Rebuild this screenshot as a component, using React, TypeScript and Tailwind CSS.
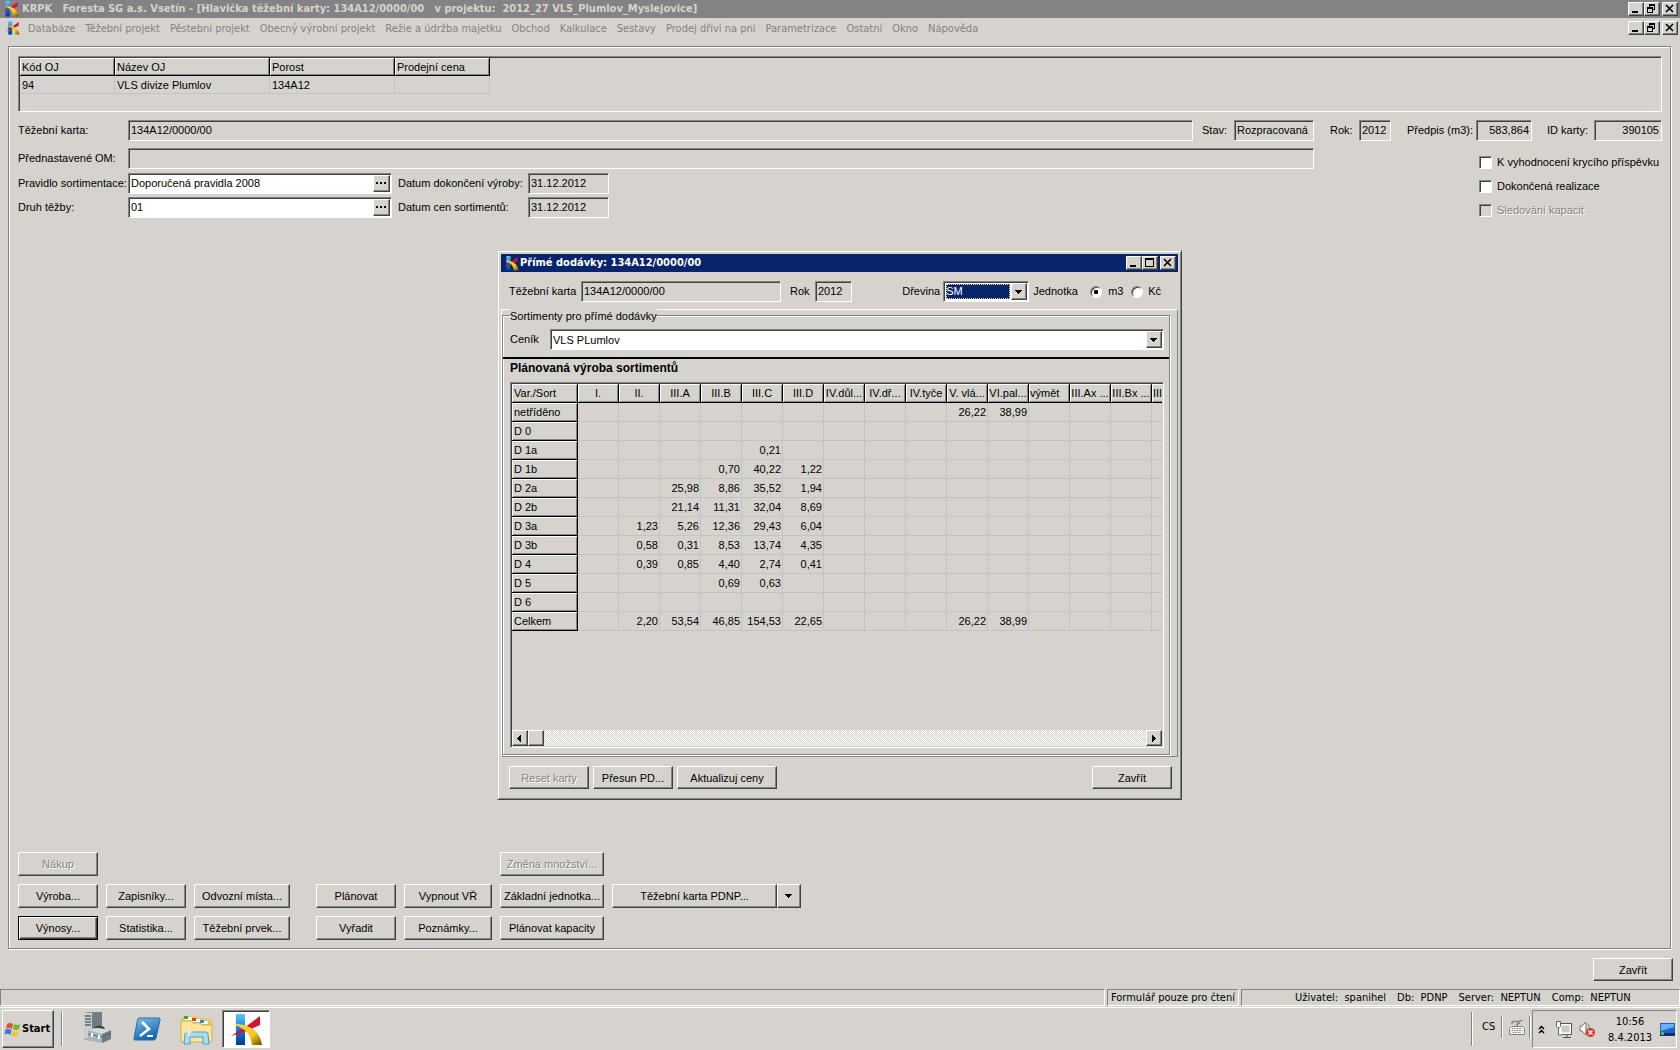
import type { ReactNode } from 'react';

const RAISED =
  'border border-t-white border-l-white border-r-[#424142] border-b-[#424142] bg-[#d6d3ce] shadow-[inset_-1px_-1px_0_#848284]';
const SUNKEN =
  'border border-t-[#848284] border-l-[#848284] border-r-white border-b-white shadow-[inset_1px_1px_0_#424142]';
const FIELD = SUNKEN + ' h-[21px] min-w-0 px-0.5 pb-[3px] pt-px leading-[15px] outline-none';
const PANE = 'border border-b-white border-l-[#848284] border-r-white border-t-[#848284]';
const UI = 'font-["DejaVu_Sans_Condensed","DejaVu_Sans",sans-serif]';

const MENU = [
  'Databáze', 'Těžební projekt', 'Pěstební projekt', 'Obecný výrobní projekt', 'Režie a údržba majetku',
  'Obchod', 'Kalkulace', 'Sestavy', 'Prodej dříví na pni', 'Parametrizace', 'Ostatní', 'Okno', 'Nápověda',
];

const STATUS = ['Uživatel:  spanihel', 'Db:  PDNP', 'Server:  NEPTUN', 'Comp:  NEPTUN'];

const COLS = [
  'I.', 'II.', 'III.A', 'III.B', 'III.C', 'III.D', 'IV.důl...', 'IV.dř...', 'IV.tyče', 'V. vlá...',
  'VI.pal...', 'výmět', 'III.Ax ...', 'III.Bx ...', 'III',
];

const ROWS: [string, Record<number, string>][] = [
  ['netříděno', { 9: '26,22', 10: '38,99' }],
  ['D 0', {}],
  ['D 1a', { 4: '0,21' }],
  ['D 1b', { 3: '0,70', 4: '40,22', 5: '1,22' }],
  ['D 2a', { 2: '25,98', 3: '8,86', 4: '35,52', 5: '1,94' }],
  ['D 2b', { 2: '21,14', 3: '11,31', 4: '32,04', 5: '8,69' }],
  ['D 3a', { 1: '1,23', 2: '5,26', 3: '12,36', 4: '29,43', 5: '6,04' }],
  ['D 3b', { 1: '0,58', 2: '0,31', 3: '8,53', 4: '13,74', 5: '4,35' }],
  ['D 4', { 1: '0,39', 2: '0,85', 3: '4,40', 4: '2,74', 5: '0,41' }],
  ['D 5', { 3: '0,69', 4: '0,63' }],
  ['D 6', {}],
  ['Celkem', { 1: '2,20', 2: '53,54', 3: '46,85', 4: '154,53', 5: '22,65', 9: '26,22', 10: '38,99' }],
];

function Logo({ className }: { className: string }) {
  return (
    <svg viewBox="0 0 32 32" className={className} aria-hidden="true">
      <defs>
        <linearGradient id="kb" x1="0" y1="0" x2="0" y2="1">
          <stop offset="0" stopColor="#5ec8fa" />
          <stop offset="0.5" stopColor="#1479d8" />
          <stop offset="1" stopColor="#04398c" />
        </linearGradient>
        <linearGradient id="ky" x1="0" y1="0" x2="1" y2="1">
          <stop offset="0" stopColor="#ffd83a" />
          <stop offset="0.6" stopColor="#f6c81e" />
          <stop offset="1" stopColor="#6b4a05" />
        </linearGradient>
      </defs>
      <rect x="5" y="0" width="9" height="31" fill="url(#kb)" />
      <path d="M29 2v9L16 17 0 22l9-6 8-5z" fill="#d4142e" />
      <path d="M4 10c13 0 25 6 27 21H21C20 21 15 15 4 11z" fill="url(#ky)" />
    </svg>
  );
}

function WinButton({ kind }: { kind: 'min' | 'restore' | 'max' | 'close' }) {
  return (
    <button type="button" aria-label={kind} className={`${RAISED} flex h-[14px] w-4 items-center justify-center`}>
      <svg width="12" height="10" viewBox="0 0 12 10" shapeRendering="crispEdges" fill="none" stroke="#000">
        {kind === 'min' && <path d="M2 8h6" strokeWidth="2" />}
        {kind === 'max' && <path d="M1.5 1v7.5h8V1M1 1h9" strokeWidth="1" />}
        {kind === 'max' && <path d="M1 1h9" strokeWidth="2" />}
        {kind === 'restore' && (
          <>
            <path d="M3.5 3V1.5h5v4H7M1.5 4v4.5h5V4" />
            <path d="M3 1h6M1 4h6" strokeWidth="2" />
          </>
        )}
        {kind === 'close' && <path d="M2 1l7 7M9 1L2 8" strokeWidth="1.6" shapeRendering="auto" />}
      </svg>
    </button>
  );
}

function WinButtons({ middle }: { middle: 'restore' | 'max' }) {
  return (
    <div className="flex shrink-0">
      <WinButton kind="min" />
      <WinButton kind={middle} />
      <span className="w-0.5" />
      <WinButton kind="close" />
    </div>
  );
}

function Btn({ children, className = 'h-6', disabled, primary }: { children: ReactNode; className?: string; disabled?: boolean; primary?: boolean }) {
  return (
    <button
      type="button"
      disabled={disabled}
      className={`${
        primary
          ? 'border border-black bg-[#d6d3ce] shadow-[inset_1px_1px_0_white,inset_-1px_-1px_0_#424142,inset_-2px_-2px_0_#848284]'
          : RAISED
      } whitespace-nowrap text-center leading-5 disabled:text-[#848284] disabled:[text-shadow:1px_1px_0_white] ${className}`}
    >
      {children}
    </button>
  );
}

function Down() {
  return (
    <svg width="7" height="4" viewBox="0 0 7 4" shapeRendering="crispEdges" aria-hidden="true">
      <path d="M0 0h7v1H6v1H5v1H4v1H3V3H2V2H1V1H0z" />
    </svg>
  );
}

function DotsField({ id, value }: { id: string; value: string }) {
  return (
    <div className={`${SUNKEN} flex h-[21px] w-[264px] bg-white p-px`}>
      <input id={id} defaultValue={value} className="min-w-0 flex-1 bg-white px-px pb-px leading-4 outline-none" />
      <button type="button" aria-label="Vybrat" className={`${RAISED} flex w-[17px] items-center justify-center gap-0.5 pb-px pr-px`}>
        <i className="size-0.5 bg-black" />
        <i className="size-0.5 bg-black" />
        <i className="size-0.5 bg-black" />
      </button>
    </div>
  );
}

function Check({ label, disabled }: { label: string; disabled?: boolean }) {
  return (
    <label className={`flex h-[13px] items-center gap-[5px] whitespace-nowrap ${disabled ? 'text-[#848284] [text-shadow:1px_1px_0_white]' : ''}`}>
      <input type="checkbox" disabled={disabled} className={`${SUNKEN} size-[13px] shrink-0 appearance-none bg-white disabled:bg-[#d6d3ce]`} />
      {label}
    </label>
  );
}

function HeadCell({ children, className = '' }: { children: ReactNode; className?: string }) {
  return (
    <th
      className={`overflow-hidden whitespace-nowrap border-b border-r border-black p-0 font-normal leading-4 shadow-[inset_1px_1px_0_white,inset_-1px_-1px_0_#848284] ${className}`}
    >
      {children}
    </th>
  );
}

function UnitTable() {
  return (
    <div className={`${SUNKEN} h-14 p-px`}>
      <table className="w-[470px] table-fixed border-separate border-spacing-0 text-left">
        <thead>
          <tr className="h-[18px]">
            <HeadCell className="w-[95px] pl-0.5">Kód OJ</HeadCell>
            <HeadCell className="w-[155px] pl-0.5">Název OJ</HeadCell>
            <HeadCell className="w-[125px] pl-0.5">Porost</HeadCell>
            <HeadCell className="w-[95px] pl-0.5">Prodejní cena</HeadCell>
          </tr>
        </thead>
        <tbody>
          <tr className="h-[18px]">
            {['94', 'VLS divize Plumlov', '134A12', ''].map((t, i) => (
              <td key={i} className="border-b border-r border-[#c6c3c6] p-0 pl-0.5 leading-4">{t}</td>
            ))}
          </tr>
        </tbody>
      </table>
    </div>
  );
}

function Radio({ on }: { on?: boolean }) {
  return (
    <input
      type="radio"
      name="jednotka"
      defaultChecked={on}
      className="size-3 appearance-none rounded-full border border-b-white border-l-[#848284] border-r-white border-t-[#848284] bg-white shadow-[inset_1px_1px_0_#424142] checked:bg-[radial-gradient(circle,#000_0_2px,#fff_2.5px)]"
    />
  );
}

function Dialog() {
  return (
    <section
      aria-label="Přímé dodávky"
      className="absolute left-[497px] top-[250px] w-[685px] border border-b-[#424142] border-l-[#d6d3ce] border-r-[#424142] border-t-[#d6d3ce] bg-[#d6d3ce] p-[3px] shadow-[inset_1px_1px_0_white,inset_-1px_-1px_0_#848284]"
    >
      <div className="flex h-[18px] items-center bg-[#08246b] pl-[3px] pr-0.5 text-white">
        <Logo className="size-[15px]" />
        <h2 className={`${UI} ml-px flex-1 text-[11px] font-bold leading-4`}>Přímé dodávky: 134A12/0000/00</h2>
        <WinButtons middle="max" />
      </div>

      <div className="flex items-center pb-[7px] pt-[9px]">
        <label htmlFor="dkarta" className="w-20 pl-2">Těžební karta</label>
        <input id="dkarta" readOnly value="134A12/0000/00" className={`${FIELD} w-[200px]`} />
        <label htmlFor="drok" className="w-[34px] pl-[9px]">Rok</label>
        <input id="drok" readOnly value="2012" className={`${FIELD} w-[37px]`} />
        <span className="flex-1" />
        <label htmlFor="drevina" className="mr-[3px]">Dřevina</label>
        <div className={`${SUNKEN} relative flex h-[21px] w-[86px] bg-white p-px`}>
          <select id="drevina" className="m-px w-[64px] appearance-none bg-[#08246b] leading-[15px] text-white outline-1 -outline-offset-1 outline-dotted outline-[#f7db94]">
            <option>SM</option>
          </select>
          <span className={`${RAISED} pointer-events-none absolute inset-y-px right-px flex w-4 items-center justify-center pr-px`}><Down /></span>
        </div>
        <span className="ml-1 w-[57px]">Jednotka</span>
        <label className="flex w-[41px] items-center gap-[6px]">
          <Radio on />
          m3
        </label>
        <label className="mr-[17px] flex items-center gap-[5px]">
          <Radio />
          Kč
        </label>
      </div>

      <div className="border border-b-[#848284] border-l-white border-r-[#848284] border-t-white pb-px pr-[7px] pt-[5px]">
        <fieldset className="min-w-0 border border-[#848284] pl-[7px] pr-[5px] shadow-[inset_1px_1px_0_white,1px_1px_0_white]">
          <div className="-mt-2 h-4">
            <legend className="float-left bg-[#d6d3ce] leading-4">Sortimenty pro přímé dodávky</legend>
          </div>
          <div className="mt-[5px] flex items-center">
            <label htmlFor="cenik" className="w-10">Ceník</label>
            <div className={`${SUNKEN} relative flex h-[21px] flex-1 bg-white p-px`}>
              <select id="cenik" className="w-full appearance-none bg-white pl-px leading-4 outline-none">
                <option>VLS PLumlov</option>
              </select>
              <span className={`${RAISED} pointer-events-none absolute inset-y-px right-px flex w-4 items-center justify-center pr-px`}><Down /></span>
            </div>
          </div>
          <div className="-ml-[7px] -mr-[5px] mt-[7px] h-0.5 bg-black" />
          <h3 className="text-xs font-bold leading-[18px]">Plánovaná výroba sortimentů</h3>
          <div className={`${SUNKEN} mb-[6px] mt-[5px] flex h-[366px] flex-col p-px`}>
            <div className="flex-1 overflow-hidden">
              <table className="w-[681px] table-fixed border-separate border-spacing-0">
                <thead>
                  <tr className="h-[19px]">
                    <HeadCell className="w-[66px] pl-0.5 text-left">Var./Sort</HeadCell>
                    {COLS.map((c) => (
                      <HeadCell key={c} className={`w-[41px] ${c === 'výmět' || c === 'III' ? 'pl-px text-left' : ''}`}>{c}</HeadCell>
                    ))}
                  </tr>
                </thead>
                <tbody>
                  {ROWS.map(([name, vals]) => (
                    <tr key={name} className="h-[19px]">
                      <HeadCell className="pl-0.5 text-left">{name}</HeadCell>
                      {COLS.map((c, i) => (
                        <td key={c} className="border-b border-r border-[#c6c3c6] p-0 pr-px text-right leading-4">{vals[i] ?? ''}</td>
                      ))}
                    </tr>
                  ))}
                </tbody>
              </table>
            </div>
            <div className="flex h-4 bg-[repeating-conic-gradient(#fff_0_25%,#d6d3ce_0_50%)] bg-[length:2px_2px]">
              <button type="button" aria-label="Doleva" className={`${RAISED} flex w-4 items-center justify-center pr-0.5`}>
                <svg width="4" height="7" viewBox="0 0 4 7" shapeRendering="crispEdges"><path d="M4 0v7L0 3.5z" /></svg>
              </button>
              <div className={`${RAISED} w-4`} />
              <button type="button" aria-label="Doprava" className={`${RAISED} ml-auto flex w-4 items-center justify-center`}>
                <svg width="4" height="7" viewBox="0 0 4 7" shapeRendering="crispEdges"><path d="M0 0v7l4-3.5z" /></svg>
              </button>
            </div>
          </div>
        </fieldset>
      </div>

      <div className="flex gap-1 pb-[7px] pl-2 pr-[6px] pt-[9px]">
        <Btn disabled className="h-[23px] w-20">Reset karty</Btn>
        <Btn className="h-[23px] w-20">Přesun PD...</Btn>
        <Btn className="h-[23px] w-[100px]">Aktualizuj ceny</Btn>
        <Btn className="ml-auto h-[23px] w-20">Zavřít</Btn>
      </div>
    </section>
  );
}

function ServerIcon() {
  return (
    <svg width="30" height="32" viewBox="0 0 30 32" aria-hidden="true">
      <path d="M1 1l4-1h14l-1 27-9 2-8-2z" fill="#8a9299" />
      <path d="M1 1h8v27l-8-2z" fill="#c9d0d4" />
      <path d="M9 1l10-1v25l-10 4z" fill="#737c84" />
      <path d="M2 4h6M2 7h6M2 10h6M2 13h6" stroke="#5c656d" strokeWidth="1.5" />
      <path d="M12 17c0-3 8-3 9 0" fill="none" stroke="#3b4248" strokeWidth="2" />
      <path d="M5 18l8-2 15 2v9l-9 4-14-3z" fill="#a9b4bb" />
      <path d="M19 22l9-4v9l-9 4z" fill="#6d7981" />
      <path d="M5 18l8-2 15 2-9 4z" fill="#d4dbdf" />
      <path d="M5 22l14 3 9-4" fill="none" stroke="#5d686f" />
      <path d="M9 21v4M16 23v4" stroke="#fff" strokeWidth="2" />
    </svg>
  );
}

function ShellIcon() {
  return (
    <svg width="28" height="24" viewBox="0 0 28 24" aria-hidden="true">
      <defs>
        <linearGradient id="ps" x1="0" y1="0" x2="0.4" y2="1">
          <stop offset="0" stopColor="#7fc0ea" />
          <stop offset="1" stopColor="#1565ad" />
        </linearGradient>
      </defs>
      <path d="M6 1h20q1.500 0 1 2l-4 18q-.5 2-2 2H2q-1.500 0-1-2L4.500 3Q5 1 6 1z" fill="url(#ps)" stroke="#2a6ca8" />
      <path d="M9 5l7 7-9 7" fill="none" stroke="#fff" strokeWidth="2.5" />
      <path d="M14 19h6" stroke="#fff" strokeWidth="2" />
    </svg>
  );
}

function FolderIcon() {
  return (
    <svg width="33" height="30" viewBox="0 0 33 30" aria-hidden="true">
      <path d="M1 4l3-3h12l2 2h12l2 3v20l-3 1H1z" fill="#e8c766" />
      <path d="M4 2h8v3H4z" fill="#fff" /><path d="M4 1h4v3H4z" fill="#1eb33a" />
      <path d="M11 4h9v3h-9z" fill="#fff" /><path d="M12 3h4v3h-4z" fill="#d8402a" />
      <path d="M19 6h9v3h-9z" fill="#fff" /><path d="M20 5h4v3h-4z" fill="#2a8be0" />
      <path d="M1 6h10l2 2h7l2 2h10v16l-4 1H1z" fill="#fbe798" stroke="#d0ad4b" />
      <path d="M4 29l1-10q0-2 2-2h19q2 0 2 2l1 10h-6v-7H10v7z" fill="#a9dbf3" stroke="#4e9cc9" />
      <path d="M9 13v8M5 17h8" stroke="#fff" />
    </svg>
  );
}

function Flag() {
  return (
    <svg width="17" height="15" viewBox="0 0 17 15" aria-hidden="true">
      <path d="M3 2q3-2 6 0L8 7Q5 5 2 6.500z" fill="#e2502a" />
      <path d="M10 2q3 2 6 0l-1 5q-3 2-6 0z" fill="#74b832" />
      <path d="M1.500 7.500q3-1.500 6 .5l-1 5q-3-2-6-.5z" fill="#3a7be0" />
      <path d="M8.500 8.500q3 2 6 0l-1 5q-3 2-6 0z" fill="#f8c32c" />
    </svg>
  );
}

function Divider({ className = '' }: { className?: string }) {
  return <span className={`w-0.5 border-l border-r border-l-[#848284] border-r-white ${className}`} />;
}

function Taskbar() {
  return (
    <footer className={`${UI} mt-px flex h-[43px] border-t border-white pb-0.5 pt-0.5 text-[11px]`}>
      <button type="button" className={`${RAISED} ml-0.5 flex h-[38px] w-[52px] items-center gap-px pl-px text-[11px] font-bold`}>
        <Flag />
        Start
      </button>
      <Divider className="my-0.5 ml-[7px]" />
      <button type="button" aria-label="Správce serveru" className="ml-5 pb-0.5"><ServerIcon /></button>
      <button type="button" aria-label="PowerShell" className="ml-5"><ShellIcon /></button>
      <button type="button" aria-label="Průzkumník" className="ml-[19px] pt-0.5"><FolderIcon /></button>
      <button type="button" aria-label="KRPK" className={`${SUNKEN} ml-[9px] flex h-[38px] w-12 items-center justify-center bg-white pl-0.5 pt-px`}>
        <Logo className="size-8" />
      </button>
      <div className="ml-auto flex">
        <Divider className="my-0.5" />
        <span className="ml-[9px] w-[19px] self-center pb-[3px]">CS</span>
        <Divider className="mb-[10px] mt-[6px]" />
        <svg width="16" height="16" viewBox="0 0 16 16" className="ml-[6px] mt-[9px]" fill="none" stroke="#848284" aria-hidden="true">
          <path d="M2.500 7.500h11l2 2v6H.5v-6z" fill="#f4f3f1" />
          <path d="M3 9.500h10M2.500 11.500h11M4 13.500h8" strokeDasharray="1.500 1" />
          <path d="M3 5V4q0-1.500 2-1.500h4q2 0 4-1.500M8 7V5.500q0-1 3-1.500" strokeWidth="1.5" />
        </svg>
        <Divider className="mb-[10px] ml-1 mt-[6px]" />
        <div className={`${PANE} ml-px mr-[3px] flex h-[38px] w-[145px] items-center pl-[5px]`}>
          <svg width="7" height="9" viewBox="0 0 7 9" fill="none" stroke="#000" strokeWidth="1.5" aria-hidden="true">
            <path d="M1 4l2.500-2.500L6 4M1 8l2.500-2.500L6 8" />
          </svg>
          <svg width="17" height="17" viewBox="0 0 17 17" className="ml-[10px]" aria-hidden="true">
            <path d="M5.500 3.500h10v9h-10z" fill="#c8cacc" stroke="#fff" strokeWidth="2" />
            <path d="M5 2.500h11.500v11H6M8 16.500h8M12 14v2" fill="none" stroke="#55585a" />
            <path d="M1.500.5h4v5l-1 1h-2l-1-1zM3.500 6v8h3" fill="#fff" stroke="#666" />
          </svg>
          <svg width="17" height="17" viewBox="0 0 17 17" className="ml-[7px]" aria-hidden="true">
            <path d="M1 5h2l4-4v13l-4-4H1z" fill="#f4f4f4" stroke="#777" />
            <path d="M9 3q2 3 1 6" fill="none" stroke="#888" />
            <circle cx="11.5" cy="11.5" r="4.5" fill="#e03326" />
            <path d="M9.500 9.500l4 4M13.500 9.500l-4 4" stroke="#fff" strokeWidth="1.5" />
          </svg>
          <div className="flex-1 pl-2 pt-px text-center leading-4">
            <div>10:56</div>
            <div>8.4.2013</div>
          </div>
          <svg width="15" height="13" viewBox="0 0 15 13" className="ml-1 mr-px" aria-hidden="true">
            <path d="M0 0h15v13H0z" fill="#1f62c8" />
            <path d="M1 1h13v3L1 8z" fill="#68aef5" />
            <path d="M0 10h15v3H0z" fill="#15305e" />
            <path d="M1 9h3v3H1z" fill="#4cc14c" />
          </svg>
        </div>
      </div>
    </footer>
  );
}

export default function App() {
  return (
    <div className='relative flex min-h-screen flex-col overflow-hidden bg-[#d6d3ce] font-["Liberation_Sans",Arial,sans-serif] text-[11px] text-black'>
      <header className="flex h-[18px] items-center bg-[#848284] pl-[3px] pr-0.5 text-[#d6d3ce]">
        <Logo className="size-4" />
        <h1 className={`${UI} ml-[3px] flex-1 whitespace-pre text-[11px] font-bold leading-4`}>
          {'KRPK   Foresta SG a.s. Vsetín - [Hlavička těžební karty: 134A12/0000/00   v projektu:  2012_27 VLS_Plumlov_Myslejovice]'}
        </h1>
        <WinButtons middle="restore" />
      </header>

      <nav className="flex h-7 items-start pl-[6px] pr-0.5 pt-[3px]">
        <Logo className="size-[14px]" />
        <div className={`${UI} ml-2 flex flex-1 gap-2.5 text-[11px] leading-4 text-[#848284]`}>
          {MENU.map((m) => (
            <button key={m} type="button" className="whitespace-nowrap">{m}</button>
          ))}
        </div>
        <WinButtons middle="restore" />
      </nav>

      <main className="ml-2 mr-[9px] flex flex-1 flex-col border border-[#848284] pb-2 pl-[9px] pr-2 pt-[9px] shadow-[inset_1px_1px_0_white,1px_1px_0_white]">
        <UnitTable />
        <div className="mt-2 flex items-center">
          <label htmlFor="karta" className="w-[110px]">Těžební karta:</label>
          <input id="karta" readOnly value="134A12/0000/00" className={`${FIELD} flex-1`} />
          <label htmlFor="stav" className="w-[41px] pl-[9px]">Stav:</label>
          <input id="stav" readOnly value="Rozpracovaná" className={`${FIELD} w-20`} />
          <label htmlFor="rok" className="w-[45px] pl-4">Rok:</label>
          <input id="rok" readOnly value="2012" className={`${FIELD} w-8`} />
          <label htmlFor="predpis" className="w-[85px] whitespace-nowrap pl-4">Předpis (m3):</label>
          <input id="predpis" readOnly value="583,864" className={`${FIELD} w-14 text-right`} />
          <label htmlFor="idk" className="w-[62px] pl-[15px]">ID karty:</label>
          <input id="idk" readOnly value="390105" className={`${FIELD} w-[68px] text-right`} />
        </div>

        <div className="flex">
          <div className="mr-[165px] flex-1">
            <div className="mt-[7px] flex items-center">
              <label htmlFor="om" className="w-[110px]">Přednastavené OM:</label>
              <input id="om" readOnly value="" className={`${FIELD} flex-1`} />
            </div>
            <div className="mt-1 flex items-center">
              <label htmlFor="pravidlo" className="w-[110px] whitespace-nowrap">Pravidlo sortimentace:</label>
              <DotsField id="pravidlo" value="Doporučená pravidla 2008" />
              <label htmlFor="d1" className="w-[136px] pl-[6px]">Datum dokončení výroby:</label>
              <input id="d1" readOnly value="31.12.2012" className={`${FIELD} w-[81px]`} />
            </div>
            <div className="mt-[3px] flex items-center">
              <label htmlFor="druh" className="w-[110px]">Druh těžby:</label>
              <DotsField id="druh" value="01" />
              <label htmlFor="d2" className="w-[136px] pl-[6px]">Datum cen sortimentů:</label>
              <input id="d2" readOnly value="31.12.2012" className={`${FIELD} w-[81px]`} />
            </div>
          </div>
          <div className="flex w-[183px] flex-col gap-[11px] pt-[15px]">
            <Check label="K vyhodnocení krycího příspěvku" />
            <Check label="Dokončená realizace" />
            <Check label="Sledování kapacit" disabled />
          </div>
        </div>

        <div className="mt-auto grid grid-cols-[80px_80px_96px_10px_80px_88px_104px_189px] gap-2">
          <Btn disabled>Nákup</Btn>
          <Btn disabled className="col-start-7 h-6">Změna množství...</Btn>
          <Btn className="col-start-1 h-6">Výroba...</Btn>
          <Btn>Zapisníky...</Btn>
          <Btn>Odvozní místa...</Btn>
          <Btn className="col-start-5 h-6">Plánovat</Btn>
          <Btn>Vypnout VŘ</Btn>
          <Btn>Základní jednotka...</Btn>
          <div className="flex">
            <Btn className="h-6 flex-1">Těžební karta PDNP...</Btn>
            <button type="button" aria-label="Další karty" className={`${RAISED} flex w-6 items-center justify-center pr-px`}><Down /></button>
          </div>
          <Btn primary className="col-start-1 h-6">Výnosy...</Btn>
          <Btn>Statistika...</Btn>
          <Btn>Těžební prvek...</Btn>
          <Btn className="col-start-5 h-6">Vyřadit</Btn>
          <Btn>Poznámky...</Btn>
          <Btn>Plánovat kapacity</Btn>
        </div>
      </main>

      <div className="flex h-10 justify-end pr-[7px] pt-[9px]">
        <Btn className="h-[23px] w-20">Zavřít</Btn>
      </div>

      <div className={`${UI} flex h-[17px] gap-0.5 whitespace-pre text-[11px] leading-4`}>
        <div className={`${PANE} flex-1`} />
        <div className={`${PANE} w-[132px] pl-[3px]`}>Formulář pouze pro čtení</div>
        <div className={`${PANE} flex w-[439px] gap-[11px] pl-[53px]`}>
          {STATUS.map((s) => (
            <span key={s}>{s}</span>
          ))}
        </div>
      </div>

      <Taskbar />
      <Dialog />
    </div>
  );
}
